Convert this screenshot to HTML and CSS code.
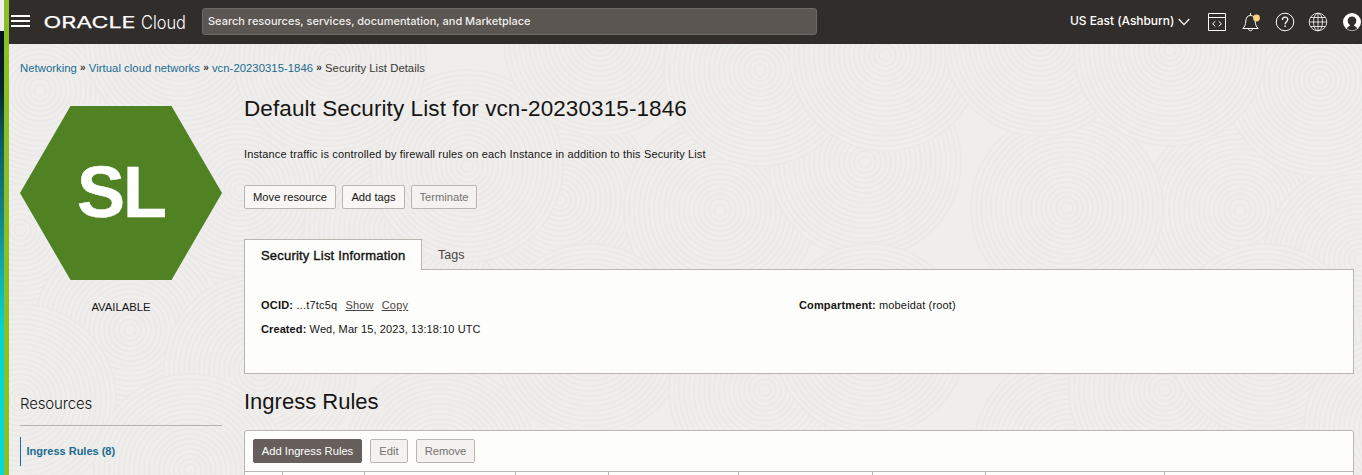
FILE: index.html
```html
<!DOCTYPE html>
<html lang="en">
<head>
<meta charset="utf-8">
<title>Security List Details</title>
<link rel="stylesheet" href="styles.css">
</head>
<body>
<div class="desktop-edge"></div>
<div class="window-edge"></div>
<div class="page">
  <svg class="texture" width="1353" height="475" viewBox="9 0 1353 475" aria-hidden="true">
    <defs>
      <g id="ripple" class="ripple">
        <circle r="96"/><circle r="91"/><circle r="86"/><circle r="81"/><circle r="76"/><circle r="71"/><circle r="66"/><circle r="61"/><circle r="56"/><circle r="51"/><circle r="46"/><circle r="41"/><circle r="36"/><circle r="31"/><circle r="26"/><circle r="21"/><circle r="16"/><circle r="11"/><circle r="6"/>
      </g>
    </defs>
    <use href="#ripple" x="20" y="230"/><use href="#ripple" x="240" y="190"/><use href="#ripple" x="400" y="230"/><use href="#ripple" x="560" y="200"/><use href="#ripple" x="720" y="210"/><use href="#ripple" x="1240" y="210"/><use href="#ripple" x="1360" y="260"/>
    <use href="#ripple" x="1067" y="208"/><use href="#ripple" x="865" y="162"/><use href="#ripple" x="467" y="166"/>
    <use href="#ripple" x="40" y="90"/><use href="#ripple" x="180" y="40"/><use href="#ripple" x="330" y="60"/><use href="#ripple" x="600" y="40"/><use href="#ripple" x="760" y="70"/><use href="#ripple" x="885" y="55"/><use href="#ripple" x="1040" y="40"/><use href="#ripple" x="1320" y="80"/><use href="#ripple" x="1170" y="50"/>
    <use href="#ripple" x="130" y="330"/><use href="#ripple" x="20" y="400"/><use href="#ripple" x="260" y="370"/><use href="#ripple" x="190" y="470"/><use href="#ripple" x="440" y="460"/><use href="#ripple" x="590" y="340"/><use href="#ripple" x="765" y="390"/><use href="#ripple" x="1070" y="450"/><use href="#ripple" x="1165" y="390"/><use href="#ripple" x="870" y="340"/><use href="#ripple" x="1265" y="340"/><use href="#ripple" x="1400" y="430"/>
  </svg>

  <header class="topbar">
    <svg class="menu-icon" width="19" height="13" viewBox="0 0 19 13"><path d="M0 1h19M0 6h19M0 11h19"/></svg>
    <svg class="logo" width="143" height="20" viewBox="0 0 143 20" role="img" aria-label="Oracle Cloud">
      <text class="logo-oracle" x="-.5" y="16" textLength="92" lengthAdjust="spacingAndGlyphs">ORACLE</text>
      <text class="logo-cloud" x="97" y="16.500" textLength="45" lengthAdjust="spacingAndGlyphs">Cloud</text>
    </svg>
    <div class="search">Search resources, services, documentation, and Marketplace</div>
    <div class="region"><span>US East (Ashburn)</span><svg width="12" height="8" viewBox="0 0 12 8"><path d="M.7 1l5.300 5.700L11.300 1"/></svg></div>
    <nav class="tools">
      <svg width="20" height="20" viewBox="0 0 20 20"><path d="M1.500 1.500h17v17h-17zM1.500 5.500h17M8.300 9.300l-2.700 2.500 2.700 2.500M11.700 9.300l2.700 2.500-2.700 2.500"/></svg>
      <svg width="20" height="20" viewBox="0 0 20 20"><path d="M1.800 16.500c2-2 2.800-3.700 3-7.500.1-3.300 1.800-5.500 4.700-5.500s4.600 2.200 4.700 5.500c.2 3.800 1 5.500 3 7.500zM9.500 3.500V1M7.500 17c.2 2.300 3.800 2.300 4 0"/><circle class="dot" cx="15.500" cy="6" r="3.400"/></svg>
      <svg width="20" height="20" viewBox="0 0 20 20"><circle cx="10" cy="10" r="8.800"/><path class="query" d="M7.400 8c0-3.700 5.400-3.600 5.400-.5 0 2.200-2.700 2.200-2.700 4.700M10.100 13.300v1.600"/></svg>
      <svg class="globe" width="20" height="20" viewBox="0 0 20 20"><circle cx="10" cy="10" r="8.800"/><ellipse cx="10" cy="10" rx="4.500" ry="8.800"/><path d="M1.200 10h17.600M10 1.200v17.600M2.800 5.500h14.400M2.800 14.500h14.400"/></svg>
      <svg width="20" height="20" viewBox="0 0 20 20"><circle class="solid" cx="10" cy="10" r="9"/><path class="person" d="M10 4.500c-2.700 0-4.300 1.900-4.300 4.300 0 1.900.9 3.400 2.300 4.200-.2 1.400-2 1.800-3.500 3C7 19.200 13 19.200 15.500 16c-1.500-1.200-3.300-1.600-3.500-3 1.400-.8 2.300-2.300 2.300-4.200 0-2.400-1.600-4.300-4.300-4.300z"/></svg>
    </nav>
  </header>

  <nav class="crumbs"><a>Networking</a><b>»</b><a>Virtual cloud networks</a><b>»</b><a>vcn-20230315-1846</a><b>»</b><span>Security List Details</span></nav>

  <div class="columns">
    <aside class="side">
      <div class="hexagon"><span>SL</span></div>
      <div class="status">AVAILABLE</div>
      <h3 class="side-title">Resources</h3>
      <a class="side-link">Ingress Rules (8)</a>
    </aside>
    <main class="main">
      <h1 class="title">Default Security List for vcn-20230315-1846</h1>
      <p class="intro">Instance traffic is controlled by firewall rules on each Instance in addition to this Security List</p>
      <div class="actions">
        <button class="btn move">Move resource</button><button class="btn add-tags">Add tags</button><button class="btn off terminate">Terminate</button>
      </div>
      <div class="tabs"><div class="tab active">Security List Information</div><div class="tab">Tags</div></div>
      <section class="info">
        <div class="info-col">
          <div class="ocid"><b>OCID:</b> ...t7tc5q<u>Show</u><u>Copy</u></div>
          <div class="created"><b>Created:</b> Wed, Mar 15, 2023, 13:18:10 UTC</div>
        </div>
        <div class="info-col"><div class="compartment"><b>Compartment:</b> mobeidat (root)</div></div>
      </section>
      <h2 class="rules-title">Ingress Rules</h2>
      <section class="table">
        <div class="table-bar"><button class="btn primary">Add Ingress Rules</button><button class="btn off edit">Edit</button><button class="btn off remove">Remove</button></div>
        <div class="table-head"><i></i><i></i><i></i><i></i><i></i><i></i><i></i><i></i><i></i></div>
      </section>
    </main>
  </div>
</div>
</body>
</html>
```
FILE: styles.css
```css
* { box-sizing: border-box; }
body {
  margin: 0; height: 475px; overflow: hidden; display: flex;
  background: #efeeed; color: #161513;
  font: 11px/16px "Liberation Sans", Arial, sans-serif;
}
h1, h2, h3, p { margin: 0; font-weight: 400; }
.desktop-edge { width: 4px; background: linear-gradient(#f1f1f1 0 31px, #03121e 31px, #07272f 90px, #0d5c62 140px, #128086 210px, #0db1b4 275px, #00d5d5 330px, #00dcdc 475px); }
.window-edge { width: 5px; background: #8cbf26; }
.page { position: relative; width: 1353px; height: 475px; overflow: hidden; }
.texture { position: absolute; left: 0; top: 0; z-index: -1; }
.ripple { fill: #efeeed; stroke: #eae9e8; stroke-width: 1.6; }

.topbar { height: 44px; background: #312d2a; display: flex; align-items: center; color: #fff; padding-left: 2px; }
.topbar svg { fill: none; stroke: #fff; flex: none; }
.menu-icon { stroke-width: 2; margin-top: -1px; }
.logo { margin: -1px 0 0 14px; overflow: visible; }
.topbar .logo text { fill: #fff; stroke: none; }
.logo-oracle { font: 16.500px "Inter", sans-serif; }
.topbar .logo .logo-oracle { stroke: #fff; stroke-width: .25px; }
.logo-cloud { font: 300 18px "Inter", sans-serif; }
.search { margin: -2px 0 0 15px; width: 615px; height: 27px; border: 1px solid #6f6964; border-radius: 3px; background: #5b5652; padding-left: 5px; font: 500 11px/25px "Inter", sans-serif; color: #f0eeec; }
.region { margin: -2px 0 0 253px; width: 120px; display: flex; align-items: center; gap: 4px; font: 500 12px/16px "Inter", sans-serif; letter-spacing: -.06px; white-space: nowrap; }
.region span { width: 104px; }
.region svg { margin-top: 2px; stroke-width: 1.2; }
.tools { display: flex; gap: 13.750px; margin-left: 17px; }
.tools .query { stroke-width: 1.3; }
.topbar .globe { stroke-width: .8; }
.topbar .dot { fill: #fcd283; stroke: none; }
.topbar .solid { fill: #fff; stroke: none; }
.topbar .person { fill: #312d2a; stroke: none; }

.crumbs { display: flex; padding: 16px 0 0 11px; height: 48px; font-size: 11.300px; letter-spacing: .035px; white-space: nowrap; color: #3a3632; }
.crumbs a { color: #206b8f; }
.crumbs b { width: 12px; text-align: center; font-size: 10px; font-weight: 700; }

.columns { display: flex; padding-left: 11px; gap: 22px; }
.side { width: 202px; padding-top: 14px; }
.hexagon { height: 174px; background: #508223; clip-path: polygon(25% 0, 75% 0, 100% 50%, 75% 100%, 25% 100%, 0 50%); color: #fff; font-size: 72px; line-height: 172px; font-weight: 700; text-align: center; letter-spacing: -2px; -webkit-text-stroke: .5px #fff; }
.status { margin-top: 19px; text-align: center; font-size: 11.300px; }
.side-title { margin-top: 79px; height: 32px; border-bottom: 1px solid #b5b3b0; font: 300 15px/20px "Inter", sans-serif; letter-spacing: -.15px; }
.side-link { display: block; margin-top: 11px; height: 29px; line-height: 29px; border-left: 1px solid #206b8f; padding-left: 5.500px; font-weight: 700; color: #206b8f; }

.main { width: 1110px; }
.title { padding-top: 1px; font-size: 22.500px; line-height: 32px; letter-spacing: .09px; white-space: nowrap; }
.intro { margin-top: 21px; letter-spacing: .145px; }
.actions { display: flex; gap: 6px; margin-top: 23px; }
.btn { height: 24px; border: 1px solid #bbb5af; border-radius: 2px; background: #f8f7f6; color: #161513; font: 11.200px "Liberation Sans", Arial, sans-serif; padding: 0; white-space: nowrap; }
.off { background: #f3f2f0; color: #76716c; }
.move { width: 92px; }
.add-tags { width: 63px; }
.terminate { width: 66px; }
.tabs { display: flex; margin-top: 30px; height: 30px; font-size: 12.500px; line-height: 32px; color: #494542; }
.active { position: relative; width: 178px; height: 31px; background: #fdfdfc; border: 1px solid #bbb5af; border-bottom: 0; padding-left: 16px; color: #161513; font-size: 13px; letter-spacing: .2px; -webkit-text-stroke: .4px #161513; margin-right: 16px; }
.info { height: 105px; border: 1px solid #bbb5af; background: #fdfdfc; display: flex; padding: 27px 16px; letter-spacing: .1px; }
.info-col { width: 538px; display: flex; flex-direction: column; gap: 8px; }
.info u { margin-left: 8px; color: #494542; text-underline-offset: 1px; }
.ocid { letter-spacing: .2px; }
.compartment { letter-spacing: .14px; }
.rules-title { margin-top: 12px; font-size: 22px; line-height: 32px; }
.table { margin-top: 12px; border: 1px solid #bbb5af; border-radius: 3px 3px 0 0; background: #fdfdfc; height: 80px; }
.table-bar { height: 40px; padding: 8px; display: flex; gap: 8px; }
.primary { width: 109px; background: #665f5b; color: #fff; border-color: #665f5b; }
.edit { width: 38px; }
.remove { width: 59px; }
.table-head { height: 39px; border-top: 1px solid #bbb5af; display: grid; grid-template-columns: 38px 82px 151px 93px 130px 134px 113px 179px 1fr; }
.table-head i { border-right: 1px solid #bbb5af; }
.table-head i:last-child { border: 0; }
```
